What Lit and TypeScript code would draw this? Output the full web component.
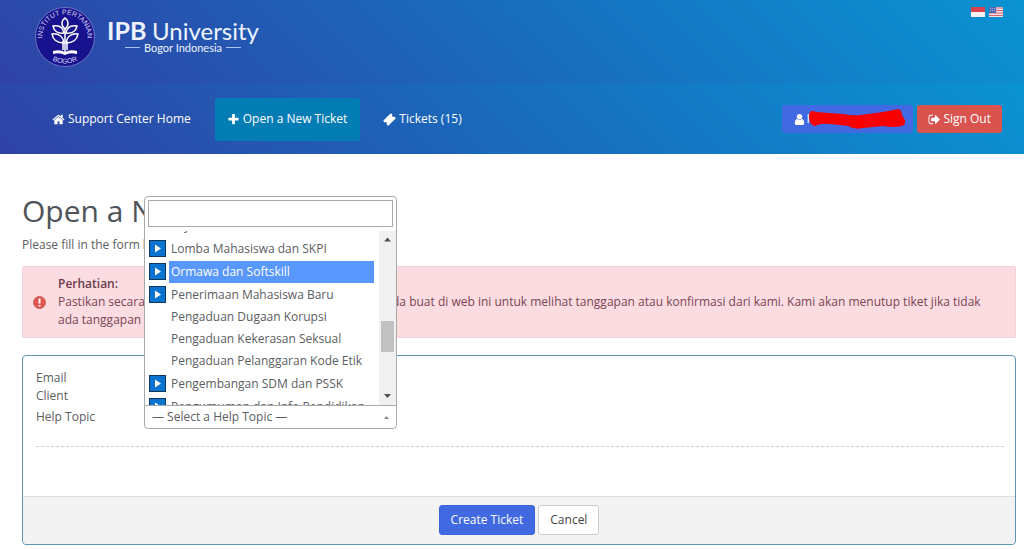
import { LitElement, html, css, svg, nothing } from "lit";
import { customElement, state } from "lit/decorators.js";
import { classMap } from "lit/directives/class-map.js";

interface Topic {
  name: string;
  group?: boolean;
}

const TOPICS: Topic[] = [
  { name: "Layanan" },
  { name: "Lomba Mahasiswa dan SKPI", group: true },
  { name: "Ormawa dan Softskill", group: true },
  { name: "Penerimaan Mahasiswa Baru", group: true },
  { name: "Pengaduan Dugaan Korupsi" },
  { name: "Pengaduan Kekerasan Seksual" },
  { name: "Pengaduan Pelanggaran Kode Etik" },
  { name: "Pengembangan SDM dan PSSK", group: true },
  { name: "Pengumuman dan Info Pendidikan", group: true },
];

// Glyphs on a 1792-unit grid, y pointing down
const ICONS: Record<string, string> = {
  home: "M1472 992v480q0 26-19 45t-45 19h-384v-384h-256v384h-384q-26 0-45-19t-19-45v-480q0-1 .5-3t.5-3l575-474 575 474q1 2 1 6zm223-69l-62 74q-8 9-21 11h-3q-13 0-21-7l-692-577-692 577q-12 8-24 7-13-2-21-11l-62-74q-8-10-7-23.500t11-21.500l719-599q32-26 76-26t76 26l244 204v-195q0-14 9-23t23-9h192q14 0 23 9t9 23v408l219 182q10 8 11 21.500t-7 23.500z",
  plus: "M1600 736v192q0 40-28 68t-68 28h-416v416q0 40-28 68t-68 28h-192q-40 0-68-28t-28-68v-416h-416q-40 0-68-28t-28-68v-192q0-40 28-68t68-28h416v-416q0-40 28-68t68-28h192q40 0 68 28t28 68v416h416q40 0 68 28t28 68z",
  ticket: "M1024 560l208 208-464 464-208-208zM1702 794l-907 908q-37 37-90.500 37t-90.500-37l-126-126q56-56 56-136t-56-136-136-56-136 56l-125-126q-37-37-37-90.500t37-90.500l907-906q37-37 90.500-37t90.500 37l125 125q-56 56-56 136t56 136 136 56 136-56l126 125q37 37 37 90.500t-37 90.500z",
  user: "M1536 1399q0 109-62.500 187t-150.500 78h-854q-88 0-150.500-78t-62.500-187q0-85 8.500-160.500t31.500-152 58.500-131 94-89 134.500-34.500q131 128 313 128t313-128q76 0 134.500 34.500t94 89 58.500 131 31.500 152 8.500 160.500zm-256-887q0 159-112.500 271.500t-271.500 112.500-271.500-112.500-112.500-271.500 112.500-271.500 271.500-112.500 271.500 112.500 112.500 271.500z",
  out: "M704 1440q0 4 1 20t.5 26.500-3 23.500-10 19.500-20.500 6.500h-320q-119 0-203.500-84.500t-84.500-203.500v-704q0-119 84.500-203.500t203.500-84.500h320q13 0 22.500 9.500t9.500 22.500q0 4 1 20t.5 26.500-3 23.500-10 19.500-20.500 6.500h-320q-66 0-113 47t-47 113v704q0 66 47 113t113 47h312l11.500 1 11.500 3 8 5.500 7 9 2 13.500zm928-544q0 26-19 45l-544 544q-19 19-45 19t-45-19-19-45v-288h-448q-26 0-45-19t-19-45v-384q0-26 19-45t45-19h448v-288q0-26 19-45t45-19 45 19l544 544q19 19 19 45z",
};

const icon = (name: string) => html`<svg class="icon" viewBox="0 0 1792 1792" aria-hidden="true">${svg`<path fill="currentColor" d=${ICONS[name]}></path>`}</svg>`;

@customElement("topic-list")
class TopicList extends LitElement {
  @state() private active = 2;

  static styles = css`
    :host { display: flex; height: 174px; }
    .list { flex: 1; min-width: 0; overflow: hidden; margin: 0; padding: 0; list-style: none; }
    .row { display: flex; align-items: center; height: 22px; padding-right: 5px; }
    .row.group { height: 23px; }
    .mark { flex: none; width: 17px; height: 17px; margin-right: 3px; }
    .name {
      flex: 1; min-width: 0; height: 22px; padding: 0 2px; border: 0; text-align: left;
      background: none; color: #5b5d61; font: inherit; line-height: 20px; white-space: nowrap;
    }
    .active .name { background: #5897fb; color: #fff; }
    .bar { width: 17px; display: flex; flex-direction: column; align-items: center; background: #f1f1f1; }
    .arrow { width: 17px; height: 17px; flex: none; }
    .track { flex: 1; width: 100%; display: grid; grid-template-rows: 73px 31px 1fr; justify-items: center; }
    .thumb { grid-row: 2; width: 13px; background: #c1c1c1; }
  `;

  firstUpdated() {
    this.renderRoot.querySelector(".list")!.scrollTop = 16;
  }

  render() {
    return html`
      <ul class="list" role="listbox" aria-label="Help Topic">
        ${TOPICS.map((t, i) => html`
          <li class=${classMap({ row: true, group: !!t.group, active: i === this.active })}
              role="option" aria-selected=${i === this.active}>
            <svg class="mark" viewBox="0 0 17 17" aria-hidden="true">
              ${t.group ? svg`<rect x="0.5" y="0.5" width="16" height="16" fill="#0b74d1" stroke="#12375c"></rect>
              <path d="M6 4.500L12 8.500L6 12.500Z" fill="#fff"></path>` : nothing}
            </svg>
            <button class="name" type="button" @click=${() => (this.active = i)}>${t.name}</button>
          </li>`)}
      </ul>
      <div class="bar" aria-hidden="true">
        <svg class="arrow" viewBox="0 0 17 17"><path d="M5 10.500L8.500 6.500L12 10.500Z" fill="#505050"></path></svg>
        <div class="track"><div class="thumb"></div></div>
        <svg class="arrow" viewBox="0 0 17 17"><path d="M5 6L8.500 10L12 6Z" fill="#505050"></path></svg>
      </div>`;
  }
}

@customElement("app-root")
class AppRoot extends LitElement {
  static styles = css`
    :host {
      display: block; min-height: 100vh; background: #fff; color: #5b5d61;
      font: 12px/18px "Open Sans", "Noto Sans", sans-serif;
    }
    * { box-sizing: border-box; }
    a { color: inherit; text-decoration: none; }
    .icon { width: 13px; height: 13px; flex: none; }
    header { color: #fff; }
    .top, nav { background: linear-gradient(45deg, #2f42a6 0%, #1d63b7 40%, #1478c4 65%, #0a93d2 100%); }
    .top { display: flex; justify-content: space-between; align-items: flex-start; padding: 7px 21px 0 35px; height: 84px; }
    .brand { display: block; width: 230px; height: 62px; }
    .flags { display: flex; gap: 4px; }
    .flags svg { display: block; width: 14px; height: 10px; }
    nav { display: flex; align-items: center; height: 70px; padding: 0 22px 0 40px; }
    .tab { display: flex; align-items: center; gap: 3px; height: 43px; padding: 0 13px 0 12px; }
    .tab.current { background: #047cb4; border-radius: 2px; }
    .tabs { display: flex; gap: 11px; flex: 1; }
    .account { display: flex; gap: 4px; }
    .pill { display: flex; align-items: center; gap: 2px; height: 28px; padding: 0 11px; border-radius: 3px; }
    .user { position: relative; width: 131px; gap: 0; background: #4169e1; }
    .scribble { position: absolute; left: 26px; top: 3px; width: 98px; height: 24px; }
    .out { background: #d9534f; }
    main { padding: 37px 8px 0 22px; }
    h1 { margin: 0; font-size: 30px; line-height: 40px; font-weight: 400; color: #4e5359; }
    .lead { margin: 5px 0 12px; }
    .alert {
      display: flex; align-items: center; gap: 12px; padding: 8px 12px 8px 10px; margin-bottom: 17px;
      border: 1px solid #f5d0d6; border-radius: 2px; background: #fbdce1; color: #7a4553;
    }
    .alert svg { width: 13px; height: 13px; flex: none; }
    .alert p { margin: 0; }
    .alert strong { display: block; font-weight: 600; color: #6e3a4b; }
    form { border: 1px solid #5f93b4; border-radius: 4px; }
    .fields { padding: 13px 11px 49px 13px; }
    .line { display: grid; grid-template-columns: 108px 1fr; }
    .topic { align-items: center; }
    .combo { position: relative; width: 253px; }
    .combo select {
      display: block; appearance: none; width: 100%; height: 24px; padding: 0 7px; border: 1px solid #aaa;
      border-radius: 0 0 4px 4px; background: #fff; color: #5b5d61; font: inherit; outline: none;
    }
    .caret { position: absolute; right: 7px; top: 10px; width: 7px; height: 5px; }
    .popup {
      position: absolute; left: 0; bottom: 23px; width: 253px; border: 1px solid #aaa;
      border-radius: 4px 4px 0 0; background: #fff; overflow: hidden;
    }
    .popup input { display: block; width: 245px; height: 27px; margin: 3px 3px 4px; border: 1px solid #aaa; font: inherit; }
    topic-list { padding-left: 4px; }
    hr { margin: 17px 0 0; border: 0; border-top: 1px dashed #cfcfcf; }
    .actions {
      display: flex; justify-content: center; gap: 3px; padding: 8px 0 9px; border-top: 1px solid #ddd;
      background: #f3f3f3; border-radius: 0 0 4px 4px;
    }
    .btn { height: 30px; padding: 0 11px; border-radius: 3px; border: 1px solid #ccc; background: #fff; color: #444; font: inherit; }
    .btn.primary { border-color: #3b63dc; background: #4169e1; color: #fff; }
  `;

  private logo() {
    return html`<svg class="brand" viewBox="0 0 230 62" role="img" aria-label="IPB University Bogor Indonesia">
      <defs>
        <path id="ringTop" d="M12.400 44A22.500 22.500 0 1 1 47.600 44"></path>
        <path id="ringBottom" d="M9 46.200A26.500 26.500 0 0 0 51 46.200"></path>
      </defs>
      <circle cx="30" cy="30" r="29.500" fill="#19128f" stroke="#8790cf" stroke-width="0.700"></circle>
      <g fill="#d5d6ef" font-family="Liberation Sans, sans-serif" font-size="7">
        <text><textPath href="#ringTop" startOffset="50%" text-anchor="middle">INSTITUT PERTANIAN</textPath></text>
        <text><textPath href="#ringBottom" startOffset="50%" text-anchor="middle">BOGOR</textPath></text>
      </g>
      <g fill="none" stroke="#fff" stroke-width="1.500">
        <path d="M30 11C26 14 26 19 30 22C34 19 34 14 30 11Z"></path>
        <path d="M29 26C28 20 24 18 18 19C19 24 23 27 29 26ZM31 26C32 20 36 18 42 19C41 24 37 27 31 26Z"></path>
        <path d="M29 36C28 29 23 26 17 27C18 33 22 36 29 36ZM31 36C32 29 37 26 43 27C42 33 38 36 31 36Z"></path>
        <path d="M30 21V45M28 34V43M32 34V43"></path>
      </g>
      <path d="M18 44Q25 42 30 45Q35 42 42 44V47Q35 45 30 48Q25 45 18 47Z" fill="#fff"></path>
      <g fill="#eef4ff" font-family="Lato, sans-serif">
        <text x="72" y="33" font-size="25" font-weight="700">IPB</text>
        <text x="117" y="33" font-size="24">University</text>
        <text x="109" y="45" font-size="11">Bogor Indonesia</text>
      </g>
      <path d="M90 40.500H105M191 40.500H206" stroke="#a9c4ec"></path>
    </svg>`;
  }

  render() {
    return html`
      <header>
        <div class="top">
          <a href="#home">${this.logo()}</a>
          <div class="flags">
            <a href="#id" aria-label="Bahasa Indonesia"><svg viewBox="0 0 14 10"><rect width="14" height="10" fill="#f2f0f0"></rect><rect width="14" height="5" fill="#d8434b"></rect></svg></a>
            <a href="#en" aria-label="English"><svg viewBox="0 0 14 10"><rect width="14" height="10" fill="#f1dfe3"></rect><path d="M0 1H14M0 3.500H14M0 6H14M0 8.500H14" stroke="#d9626c"></path><rect width="7" height="6" fill="#4a68b8"></rect><path d="M1 1.500H6M1 3.500H6" stroke="#a6b8e2" stroke-dasharray="1 1"></path></svg></a>
          </div>
        </div>
        <nav>
          <div class="tabs">
            <a class="tab" href="#home">${icon("home")}Support Center Home</a>
            <a class="tab current" href="#open">${icon("plus")}Open a New Ticket</a>
            <a class="tab" href="#tickets">${icon("ticket")}Tickets (15)</a>
          </div>
          <div class="account">
            <a class="pill user" href="#profile" aria-label="Profile">${icon("user")}I
              <svg class="scribble" viewBox="0 0 98 24" aria-hidden="true"><path fill="#f80000" d="M2 4Q5 2 8 4L35 6Q46 8 52 7L68 5Q82 3 90 1Q94 2 94 7L97 12Q98 17 94 18Q86 20 75 18L55 20Q47 22 40 18L22 16Q12 15 7 18Q2 17 2 13Q0 8 2 4Z"></path></svg>
            </a>
            <a class="pill out" href="#logout">${icon("out")}Sign Out</a>
          </div>
        </nav>
      </header>
      <main>
        <h1>Open a New Ticket</h1>
        <p class="lead">Please fill in the form below to open a new ticket.</p>
        <div class="alert" role="alert">
          <svg viewBox="0 0 13 13" aria-hidden="true"><circle cx="6.500" cy="6.500" r="6" fill="#e0564f" stroke="#c9605c"></circle><path d="M6.500 2.500V7.500M6.500 9V10.500" stroke="#fff" stroke-width="2"></path></svg>
          <p><strong>Perhatian:</strong>Pastikan secara rutin untuk mengecek email &amp; tiket yang Anda buat di web ini untuk melihat tanggapan atau konfirmasi dari kami. Kami akan menutup tiket jika tidak ada tanggapan dari Anda.</p>
        </div>
        <form @submit=${(e: Event) => e.preventDefault()}>
          <div class="fields">
            <div class="line"><span>Email</span></div>
            <div class="line"><span>Client</span></div>
            <div class="line topic">
              <label for="topic">Help Topic</label>
              <div class="combo">
                <select id="topic"><option>— Select a Help Topic —</option></select>
                <svg class="caret" viewBox="0 0 7 5" aria-hidden="true"><path d="M1 4L3.500 1L6 4Z" fill="#888"></path></svg>
                <div class="popup">
                  <input type="search" aria-label="Search help topics" />
                  <topic-list></topic-list>
                </div>
              </div>
            </div>
            <hr />
          </div>
          <div class="actions">
            <button class="btn primary" type="submit">Create Ticket</button>
            <button class="btn" type="button">Cancel</button>
          </div>
        </form>
      </main>`;
  }
}
